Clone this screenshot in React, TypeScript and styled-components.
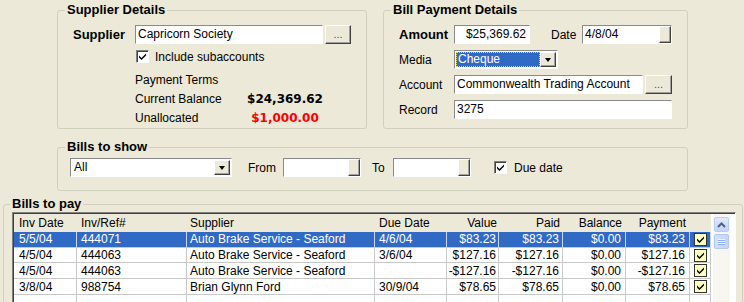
import React from "react";
import styled, { createGlobalStyle } from "styled-components";

const Global = createGlobalStyle`
  html, body { margin: 0; padding: 0; background: #ECE9D8; }
  body { font-family: "Liberation Sans", Arial, sans-serif; font-size: 12px; color: #000; }
  * { box-sizing: border-box; }
`;

const Page = styled.div`
  width: 744px;
  height: 302px;
  overflow: hidden;
  background: #ECE9D8;
  padding-top: 2px;
  display: flex;
  flex-direction: column;
`;

const TopRow = styled.div`
  display: flex;
  gap: 16px;
  margin-left: 57px;
`;

const Group = styled.fieldset<{ $w: number; $h: number; $pl?: number; $ml?: number; $mt?: number }>`
  width: ${(p) => p.$w}px;
  height: ${(p) => p.$h}px;
  min-width: 0;
  margin: ${(p) => p.$mt ?? 0}px 0 0 ${(p) => p.$ml ?? 0}px;
  padding: 0 0 0 ${(p) => p.$pl ?? 7}px;
  border: 1px solid #D0D0BF;
  border-radius: 3px;
  flex: none;
`;

const Legend = styled.legend`
  padding: 0 2px;
  font-weight: bold;
  font-size: 13px;
  line-height: 16px;
`;

const Row = styled.div<{ $mt?: number; $ml?: number }>`
  display: flex;
  align-items: center;
  height: 19px;
  margin-top: ${(p) => p.$mt ?? 0}px;
  margin-left: ${(p) => p.$ml ?? 0}px;
`;

const Label = styled.span<{ $w?: number; $bold?: boolean; $ml?: number }>`
  flex: none;
  width: ${(p) => (p.$w ? `${p.$w}px` : "auto")};
  margin-left: ${(p) => p.$ml ?? 0}px;
  font-weight: ${(p) => (p.$bold ? "bold" : "normal")};
  font-size: ${(p) => (p.$bold ? 13 : 12)}px;
  white-space: nowrap;
`;

const Field = styled.div<{ $w: number; $right?: boolean }>`
  flex: none;
  width: ${(p) => p.$w}px;
  height: 19px;
  background: #fff;
  border-style: solid;
  border-width: 1px;
  border-color: #8A8A8A #FFFFFF #FFFFFF #8A8A8A;
  padding: 0 3px 0 2px;
  line-height: 17px;
  text-align: ${(p) => (p.$right ? "right" : "left")};
  white-space: nowrap;
  overflow: hidden;
`;

const Button = styled.div<{ $w: number; $ml?: number }>`
  flex: none;
  width: ${(p) => p.$w}px;
  height: 19px;
  margin-left: ${(p) => p.$ml ?? 0}px;
  background: #ECE9D8;
  border-style: solid;
  border-width: 1px;
  border-color: #FFFFFF #404040 #404040 #FFFFFF;
  box-shadow: inset -1px -1px 0 #A0A0A0;
  font-size: 11px;
  color: #555;
  text-align: center;
  line-height: 17px;
`;

const DateBox = styled.div<{ $w: number }>`
  flex: none;
  display: flex;
  width: ${(p) => p.$w}px;
  height: 19px;
  background: #fff;
  border-style: solid;
  border-width: 1px;
  border-color: #8A8A8A #FFFFFF #FFFFFF #8A8A8A;
  line-height: 17px;
`;

const DateText = styled.div`
  flex: 1;
  padding-left: 2px;
`;

const DateButton = styled.div`
  flex: none;
  width: 12px;
  height: 100%;
  background: #ECE9D8;
  border-style: solid;
  border-width: 1px;
  border-color: #FFFFFF #404040 #404040 #FFFFFF;
  box-shadow: inset -1px -1px 0 #A0A0A0;
`;

const Combo = styled.div<{ $w: number }>`
  flex: none;
  display: flex;
  align-items: stretch;
  width: ${(p) => p.$w}px;
  height: 19px;
  background: #fff;
  border-style: solid;
  border-width: 1px;
  border-color: #8A8A8A #FFFFFF #FFFFFF #8A8A8A;
  padding: 1px;
`;

const ComboText = styled.div<{ $sel?: boolean }>`
  flex: 1;
  line-height: 15px;
  padding-left: 2px;
  background: ${(p) => (p.$sel ? "#316AC5" : "#fff")};
  color: ${(p) => (p.$sel ? "#fff" : "#000")};
  outline: ${(p) => (p.$sel ? "1px dotted #E8D27A" : "none")};
  outline-offset: -1px;
`;

const ComboButton = styled.div`
  flex: none;
  width: 16px;
  background: #ECE9D8;
  border-style: solid;
  border-width: 1px;
  border-color: #FFFFFF #404040 #404040 #FFFFFF;
  box-shadow: inset -1px -1px 0 #A0A0A0;
  display: flex;
  align-items: center;
  justify-content: center;
`;

const Arrow = styled.div`
  width: 0;
  height: 0;
  border-left: 3.5px solid transparent;
  border-right: 3.5px solid transparent;
  border-top: 4px solid #000;
  margin-left: -1px;
`;

const CheckBox = styled.div<{ $grid?: boolean }>`
  flex: none;
  width: 13px;
  height: 13px;
  background: ${(p) => (p.$grid ? "#FFFFC4" : "#fff")};
  border-style: solid;
  border-width: 1px;
  border-color: ${(p) => (p.$grid ? "#333 #333 #333 #333" : "#808080 #fff #fff #808080")};
  box-shadow: ${(p) => (p.$grid ? "none" : "inset 1px 1px 0 #404040")};
  display: flex;
  align-items: center;
  justify-content: center;
`;

const Check = () => (
  <svg width="9" height="9" viewBox="0 0 9 9">
    <path d="M1 3.5 L3.5 6 L8 1.5 L8 3.5 L3.5 8 L1 5.5 Z" fill="#000" />
  </svg>
);

const TermsGrid = styled.div`
  display: grid;
  grid-template-columns: 100px 100px;
  grid-auto-rows: 19px;
  align-items: center;
  margin: 4px 0 0 62px;
`;

const Amount = styled.span<{ $red?: boolean }>`
  justify-self: center;
  font-family: "DejaVu Sans", Verdana, sans-serif;
  font-weight: bold;
  font-size: 12px;
  color: ${(p) => (p.$red ? "#FF0000" : "#000")};
`;

const Body = styled.div<{ $mt: number; $ml: number }>`
  margin: ${(p) => p.$mt}px 0 0 ${(p) => p.$ml}px;
`;

const FormRows = styled.div`
  display: flex;
  flex-direction: column;
  gap: 6px;
  margin: 7px 0 0 8px;
`;

/* ---------- grid ---------- */

const GridBox = styled.div`
  display: flex;
  width: 724px;
  height: 100px;
  margin-left: 2px;
  background: #fff;
  border-style: solid;
  border-width: 1px;
  border-color: #808080 #fff #fff #808080;
  box-shadow: inset 1px 1px 0 #404040;
  padding: 1px 0 0 1px;
`;

const GridCols = "63px 110px 188px 72px 52px 64px 63px 64px 21px";

const GridTable = styled.div`
  flex: none;
  width: 697px;
  display: flex;
  flex-direction: column;
`;

const HeadRow = styled.div`
  display: grid;
  grid-template-columns: ${GridCols};
  height: 19px;
  background: #ECE9D8;
  align-items: center;
`;

const HeadCell = styled.div<{ $right?: boolean; $pad: number }>`
  text-align: ${(p) => (p.$right ? "right" : "left")};
  padding: ${(p) => (p.$right ? `0 ${p.$pad}px 0 0` : `0 0 0 ${p.$pad}px`)};
  white-space: nowrap;
`;

const DataRow = styled.div<{ $sel?: boolean }>`
  display: grid;
  grid-template-columns: ${GridCols};
  height: 17px;
  background: ${(p) => (p.$sel ? "#316AC5" : "#fff")};
  color: ${(p) => (p.$sel ? "#fff" : "#000")};
`;

const Cell = styled.div<{ $right?: boolean; $pad: number; $sel?: boolean; $center?: boolean }>`
  display: flex;
  align-items: center;
  justify-content: ${(p) => (p.$center ? "center" : p.$right ? "flex-end" : "flex-start")};
  padding: ${(p) => (p.$right ? `0 ${p.$pad}px 0 0` : `0 0 0 ${p.$pad}px`)};
  border-right: 1px solid ${(p) => (p.$sel ? "#C9D6EE" : "#C8C8C8")};
  border-bottom: 1px solid #C8C8C8;
  white-space: nowrap;
  overflow: hidden;
`;

const ScrollBar = styled.div`
  flex: none;
  width: 17px;
  margin-left: 2px;
  display: flex;
  flex-direction: column;
  background: #F7F6F1;
  padding-top: 3px;
`;

const ScrollBtn = styled.div`
  height: 15px;
  margin: 0 1px;
  border: 1px solid #BACEF3;
  border-radius: 2px;
  background: linear-gradient(#E0E9FD, #C2D4FA);
  display: flex;
  align-items: center;
  justify-content: center;
`;

const Thumb = styled.div`
  height: 15px;
  margin: 2px 1px 0;
  border: 1px solid #B2C7F2;
  border-radius: 2px;
  background: linear-gradient(90deg, #D3E0FC, #C4D5FB);
  display: flex;
  flex-direction: column;
  align-items: center;
  justify-content: center;
  gap: 1px;
`;

const Grip = styled.div`
  width: 7px;
  height: 1px;
  background: #EEF3FE;
  box-shadow: 0 1px 0 #8CB0F8;
`;

type Bill = {
  d: string;
  r: string;
  s: string;
  due: string;
  v: string;
  p: string;
  b: string;
  pay: string;
};

const bills: Bill[] = [
  { d: "5/5/04", r: "444071", s: "Auto Brake Service - Seaford", due: "4/6/04", v: "$83.23", p: "$83.23", b: "$0.00", pay: "$83.23" },
  { d: "4/5/04", r: "444063", s: "Auto Brake Service - Seaford", due: "3/6/04", v: "$127.16", p: "$127.16", b: "$0.00", pay: "$127.16" },
  { d: "4/5/04", r: "444063", s: "Auto Brake Service - Seaford", due: "", v: "-$127.16", p: "-$127.16", b: "$0.00", pay: "-$127.16" },
  { d: "3/8/04", r: "988754", s: "Brian Glynn Ford", due: "30/9/04", v: "$78.65", p: "$78.65", b: "$0.00", pay: "$78.65" },
  { d: "", r: "", s: "", due: "", v: "", p: "", b: "", pay: "" },
];

const cols: { key: keyof Bill; title: string; right?: boolean; pad: number }[] = [
  { key: "d", title: "Inv Date", pad: 5 },
  { key: "r", title: "Inv/Ref#", pad: 4 },
  { key: "s", title: "Supplier", pad: 3 },
  { key: "due", title: "Due Date", pad: 4 },
  { key: "v", title: "Value", right: true, pad: 2 },
  { key: "p", title: "Paid", right: true, pad: 3 },
  { key: "b", title: "Balance", right: true, pad: 4 },
  { key: "pay", title: "Payment", right: true, pad: 4 },
];

export default function App() {
  return (
    <>
      <Global />
      <Page>
        <TopRow>
          <Group $w={310} $h={127}>
            <Legend>Supplier Details</Legend>
            <FormRows>
              <Row>
                <Label $w={62} $bold>Supplier</Label>
                <Field $w={188}>Capricorn Society</Field>
                <Button $w={26} $ml={2}>...</Button>
              </Row>
            </FormRows>
            <Row $ml={71} $mt={3}>
              <CheckBox><Check /></CheckBox>
              <Label $ml={6}>Include subaccounts</Label>
            </Row>
            <Body $mt={0} $ml={8}>
              <TermsGrid>
                <Label>Payment Terms</Label>
                <span />
                <Label>Current Balance</Label>
                <Amount>$24,369.62</Amount>
                <Label>Unallocated</Label>
                <Amount $red>$1,000.00</Amount>
              </TermsGrid>
            </Body>
          </Group>
          <Group $w={305} $h={127}>
            <Legend>Bill Payment Details</Legend>
            <FormRows>
              <Row>
                <Label $w={55} $bold>Amount</Label>
                <Field $w={76} $right>$25,369.62</Field>
                <Label $w={31} $ml={21}>Date</Label>
                <DateBox $w={90}>
                  <DateText>4/8/04</DateText>
                  <DateButton />
                </DateBox>
              </Row>
              <Row>
                <Label $w={55}>Media</Label>
                <Combo $w={104}>
                  <ComboText $sel>Cheque</ComboText>
                  <ComboButton><Arrow /></ComboButton>
                </Combo>
              </Row>
              <Row>
                <Label $w={55}>Account</Label>
                <Field $w={189}>Commonwealth Trading Account</Field>
                <Button $w={27} $ml={2}>...</Button>
              </Row>
              <Row>
                <Label $w={55}>Record</Label>
                <Field $w={218}>3275</Field>
              </Row>
            </FormRows>
          </Group>
        </TopRow>

        <Group $w={631} $h={52} $ml={57} $mt={10}>
          <Legend>Bills to show</Legend>
          <Row $mt={3} $ml={5}>
            <Combo $w={162}>
              <ComboText>All</ComboText>
              <ComboButton><Arrow /></ComboButton>
            </Combo>
            <Label $w={35} $ml={16}>From</Label>
            <DateBox $w={78}>
              <DateText />
              <DateButton />
            </DateBox>
            <Label $w={21} $ml={11}>To</Label>
            <DateBox $w={78}>
              <DateText />
              <DateButton />
            </DateBox>
            <CheckBox style={{ marginLeft: 23 }}><Check /></CheckBox>
            <Label $ml={7}>Due date</Label>
          </Row>
        </Group>

        <Group $w={740} $h={140} $ml={3} $mt={5} $pl={6}>
          <Legend>Bills to pay</Legend>
          <GridBox>
            <GridTable>
              <HeadRow>
                {cols.map((c) => (
                  <HeadCell key={c.key} $right={c.right} $pad={c.pad}>{c.title}</HeadCell>
                ))}
                <span />
              </HeadRow>
              {bills.map((b, i) => (
                <DataRow key={i} $sel={i === 0}>
                  {cols.map((c) => (
                    <Cell key={c.key} $right={c.right} $pad={c.pad} $sel={i === 0}>{b[c.key]}</Cell>
                  ))}
                  <Cell $pad={0} $center $sel={i === 0}>
                    {b.d && (
                      <CheckBox $grid><Check /></CheckBox>
                    )}
                  </Cell>
                </DataRow>
              ))}
            </GridTable>
            <ScrollBar>
              <ScrollBtn>
                <svg width="9" height="6" viewBox="0 0 9 6">
                  <path d="M1 5 L4.5 1.5 L8 5" stroke="#4D6185" strokeWidth="2" fill="none" />
                </svg>
              </ScrollBtn>
              <Thumb>
                <Grip />
                <Grip />
                <Grip />
              </Thumb>
            </ScrollBar>
          </GridBox>
        </Group>
      </Page>
    </>
  );
}
